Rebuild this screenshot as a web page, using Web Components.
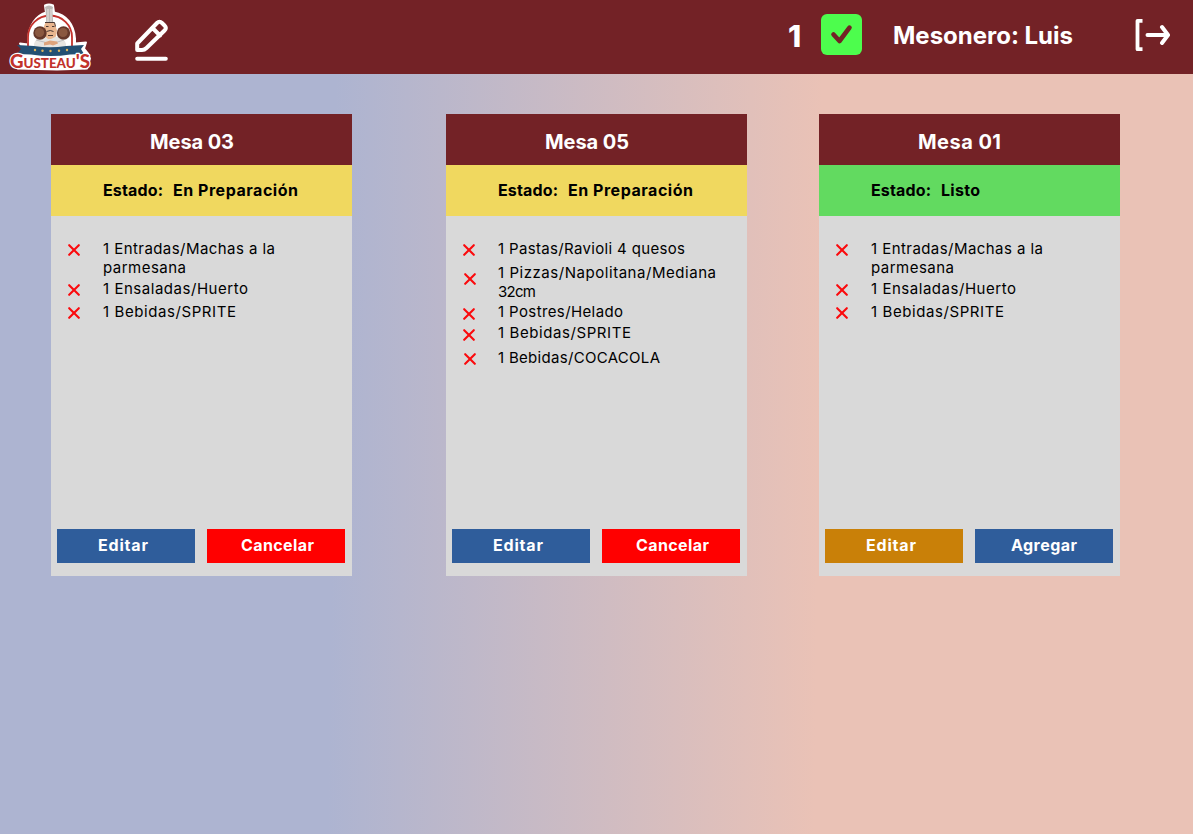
<!DOCTYPE html>
<html lang="es">
<head>
<meta charset="utf-8">
<title>Gusteau's</title>
<style>
html,body{margin:0;height:100%;background:#fff;overflow:hidden}
</style>
</head>
<body>
<gusteau-app></gusteau-app>
<script>
const define = (name, html, after) => customElements.define(name, class extends HTMLElement {
  connectedCallback() {
    if (this.shadowRoot) return;
    this.attachShadow({mode: 'open'}).innerHTML = typeof html === 'function' ? html(this) : html;
    if (after) after(this);
  }
});

// Text run spaced so that it fills the width given in "w".
define('fit-text', `<style>:host{display:block;white-space:pre;width:max-content}span{display:inline-block}</style><span><slot></slot></span>`, el => {
  const span = el.shadowRoot.querySelector('span');
  const gap = (Number(el.getAttribute('w')) - span.getBoundingClientRect().width) / Math.max(1, el.textContent.length - 1);
  span.style.letterSpacing = gap + 'px';
  span.style.marginRight = -gap + 'px';
});

define('brand-logo', `<style>:host{display:block;width:86px;height:70px}svg{display:block}</style>
<svg width="86" height="70" viewBox="0 0 86 70">
  <g fill="#fff" stroke="#fff" stroke-width="2" stroke-linejoin="round">
    <path d="M37 3.500q4-2 8 0l1 7c12 2 20 12 21 26v5l11-1-2 6 4 5 2 5-3 10-30 1-39-1-6-5 3-8 6-2 3-4-4-6 8 1v-5c1-14 8-24 18-27z"/>
  </g>
  <path d="M20 44v-9a22 21.500 0 0 1 44 0v9" fill="#fff" stroke="#c4322c" stroke-width="1.800"/>
  <path d="M26 45q-1-7 7-10h18q8 3 7 10l-16 3z" fill="#e6e5e2"/>
  <path d="M37 5q4-3 8 0l-.6 3 .8 12.500h-7L37.600 8z" fill="#bdbab7"/>
  <path d="M40 7v13M43 7v13" stroke="#e9e6e2" stroke-width="1"/>
  <path d="M37.500 20.500h9l2.500 8-1 6-5 2.500h-3l-4.500-4-1-5z" fill="#e9b68f"/>
  <path d="M37 20.500h9.500l1 4M38 24.500h2.500M44 24.500h2.500M38.500 29.500q4-2 7 0M40 33.500h5" fill="none" stroke="#4a3935" stroke-width="1"/>
  <circle cx="32" cy="31" r="6.700" fill="#65382a"/><circle cx="55.500" cy="31" r="6.700" fill="#65382a"/>
  <circle cx="31.500" cy="30.500" r="4.600" fill="#8a5840"/><circle cx="55" cy="30.500" r="4.600" fill="#8a5840"/>
  <path d="M28 38l12 3M56 38l-13 4" stroke="#b3b4b6" stroke-width=".8"/>
  <path d="M36 40.500l6-2 7 1 1 2-5 2-3-1-6 1z" fill="#dda47d"/>
  <path d="M9 43l17 1q16 2.500 32 0l18-1-3 4 3 5-14 .500q-19 3-39 0l-14-.500 4-5z" fill="#235073"/>
  <g fill="#e2b65a"><circle cx="27" cy="48" r="1.200"/><circle cx="34.500" cy="48.700" r="1.200"/><circle cx="42.500" cy="49" r="1.200"/><circle cx="51" cy="48.700" r="1.200"/><circle cx="59" cy="48" r="1.200"/></g>
  <text x="2" y="65.500" font-family="Lato" font-weight="900" font-size="19.500" textLength="80" lengthAdjust="spacingAndGlyphs" style="font-variant-caps:small-caps" fill="#c2322b" stroke="#fff" stroke-width="2.400" paint-order="stroke" stroke-linejoin="round">Gusteau'S</text>
</svg>`);

define('edit-icon', `<style>:host{display:block;width:34px;height:42px}svg{display:block}</style>
<svg width="34" height="42" viewBox="0 0 34 42" fill="none" stroke="#fff" stroke-width="4" stroke-linejoin="round" stroke-linecap="round">
<path d="M2.200 31V24.500L22 4q2.500-2.500 5 0l2.500 2.500q2.500 2.500 0 5L11.500 29q-2 2-4.500 2zM17.500 9l7.500 7.500"/><path d="M2.200 39.700h28.600"/></svg>`);

define('ready-badge', `<style>:host{display:grid;place-items:center;width:41px;height:41px;border-radius:6px;background:#4dfd4d}</style>
<svg width="41" height="41" viewBox="0 0 41 41" fill="none" stroke="#732226" stroke-width="4.600" stroke-linecap="round" stroke-linejoin="round"><path d="M12.500 20.500l6 6.500L28.500 13.700"/></svg>`);

define('logout-icon', `<style>:host{display:block;width:36px;height:34px}svg{display:block}</style>
<svg width="36" height="34" viewBox="0 0 36 34" fill="none" stroke="#fff" stroke-linecap="round" stroke-linejoin="round"><path d="M8.500 2.800H3.500v28.400h5" stroke-width="3.800" stroke-linecap="butt"/><path d="M13.500 17h19.500M28 9l6 8-6 8" stroke-width="4"/></svg>`);

define('top-bar', `<style>
:host{display:flex;height:74px;box-sizing:border-box;background:#732226;color:#fff;font-weight:700}
brand-logo{margin:2px 0 0 8px}edit-icon{margin:19px 0 0 41px}
.count{margin:18px 0 0 auto;font-size:30px;line-height:37px;width:15px;font-weight:800}
ready-badge{margin:14px 0 0 18px}
.who{margin:18px 0 0 31px;font-size:24px;line-height:35px;width:180px;font-weight:650}
logout-icon{margin:18px 23px 0 61px}
</style>
<brand-logo></brand-logo><edit-icon></edit-icon><fit-text class="count" w="15">1</fit-text><ready-badge></ready-badge><fit-text class="who" w="180">Mesonero: Luis</fit-text><logout-icon></logout-icon>`);

define('action-button', el => `<style>
:host{display:flex;box-sizing:border-box;width:138px;height:34px;padding-left:${el.getAttribute('inset')}px;background:${el.getAttribute('color')};color:#fff;font-weight:700;font-size:16px;line-height:33px}
</style><fit-text w="${el.getAttribute('w')}">${el.textContent}</fit-text>`);

define('order-item', el => {
  const [top, ix, iy] = el.getAttribute('at').split(',');
  const lines = el.getAttribute('lines').split('|').map(l => l.split('='));
  return `<style>
:host{display:grid;grid-template-columns:52px 1fr;margin-top:${top}px;font-size:15px;line-height:19px}
svg{display:block;margin:${iy}px 0 0 ${ix}px}
</style><svg width="12" height="12" viewBox="0 0 12 12" stroke="#fb0a0d" stroke-width="2.100" stroke-linecap="round"><path d="M1.200 1.200l9.600 9.600M10.800 1.200l-9.600 9.600"/></svg><div>${lines.map(([t, w]) => `<fit-text w="${w}">${t}</fit-text>`).join('')}</div>`;
});

define('order-card', el => `<style>
:host{display:flex;flex-direction:column;width:301px;height:462px;background:#d9d9d9}
header{height:51px;background:#732226;color:#fff;font-size:20px;font-weight:700;line-height:56px;padding-left:99px}
.state{display:flex;gap:10px;height:51px;padding-left:52px;background:${el.getAttribute('tone')};color:#000;font-size:16px;font-weight:700;line-height:50px}
.items{flex:1;padding-top:23px}
footer{display:flex;gap:12px;padding:0 6px 13px}
</style>
<header><fit-text w="${el.getAttribute('tw')}">${el.getAttribute('title-text')}</fit-text></header>
<div class="state"><fit-text w="60">Estado:</fit-text><fit-text w="${el.getAttribute('sw')}">${el.getAttribute('state')}</fit-text></div>
<div class="items"><slot></slot></div><footer><slot name="actions"></slot></footer>`);

const mesaItems = `<order-item at="0,17,5" lines="1 Entradas/Machas a la=172|parmesana=83"></order-item>
<order-item at="2,17,5" lines="1 Ensaladas/Huerto=145"></order-item>
<order-item at="4,17,5" lines="1 Bebidas/SPRITE=133"></order-item>`;
const pendingActions = `<action-button slot="actions" color="#2f5d9b" w="50" inset="41">Editar</action-button><action-button slot="actions" color="#f00" w="73" inset="34">Cancelar</action-button>`;

define('gusteau-app', `<style>
:host{display:block;width:1193px;height:834px;font-family:Inter,"Noto Sans",sans-serif;color:#000;background:linear-gradient(90.600deg,#adb4d1 28%,#eac2b6 68.500%)}
main{display:flex;padding:40px 0 0 51px}
order-card:nth-child(2){margin-left:94px}order-card:nth-child(3){margin-left:72px}
</style>
<top-bar></top-bar>
<main>
<order-card title-text="Mesa 03" tw="84" state="En Preparación" sw="125" tone="#f0d85f">${mesaItems}
${pendingActions}</order-card>
<order-card title-text="Mesa 05" tw="84" state="En Preparación" sw="125" tone="#f0d85f">
<order-item at="0,17,5" lines="1 Pastas/Ravioli 4 quesos=187"></order-item>
<order-item at="5,18,10" lines="1 Pizzas/Napolitana/Mediana=218|32cm=38"></order-item>
<order-item at="1,17,6" lines="1 Postres/Helado=125"></order-item>
<order-item at="2,17,6" lines="1 Bebidas/SPRITE=133"></order-item>
<order-item at="6,18,5" lines="1 Bebidas/COCACOLA=162"></order-item>
${pendingActions}</order-card>
<order-card title-text="Mesa 01" tw="83" state="Listo" sw="39" tone="#62da60">${mesaItems}
<action-button slot="actions" color="#c98008" w="50" inset="41">Editar</action-button><action-button slot="actions" color="#2f5d9b" w="66" inset="36">Agregar</action-button></order-card>
</main>`);
</script>
</body>
</html>
